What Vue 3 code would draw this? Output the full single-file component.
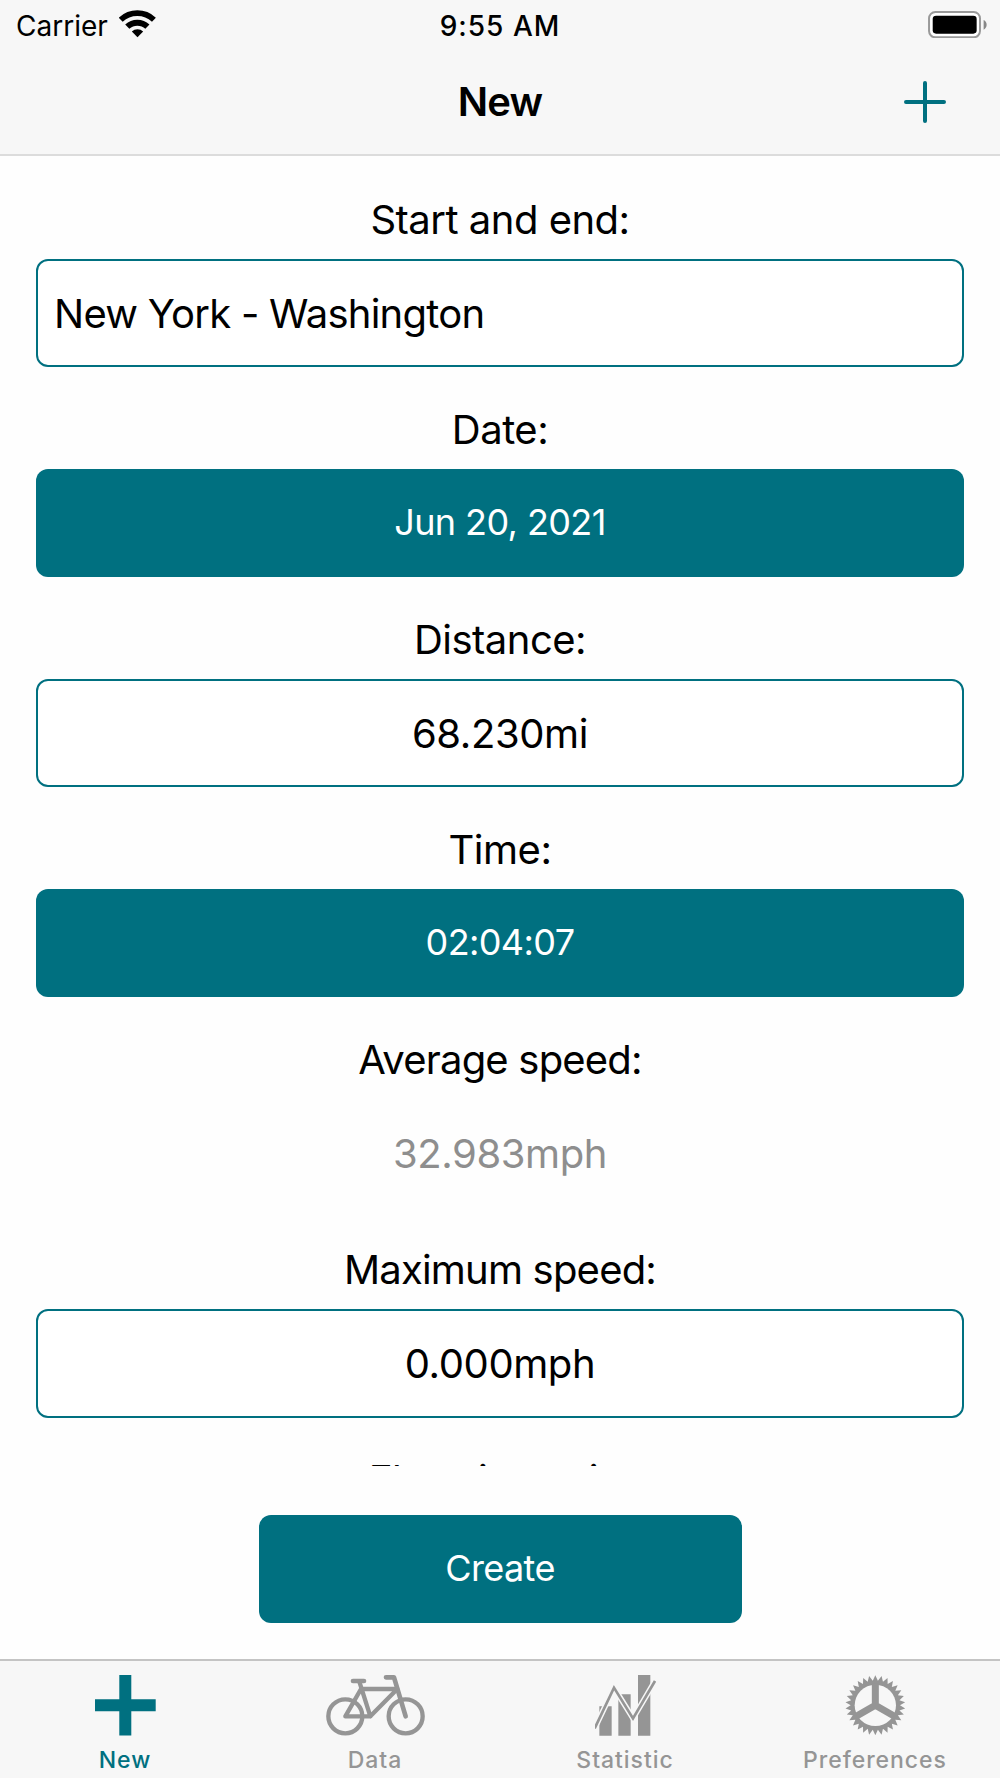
<script setup>
import { ref, computed } from 'vue'

const tour = ref('New York - Washington')
const distance = ref('68.230mi')
const maxSpeed = ref('0.000mph')
const date = ref('Jun 20, 2021')
const time = ref('02:04:07')
const avgSpeed = ref('32.983mph')

const activeTab = ref('New')

// outline of the gear, 30 small teeth around the ring
const gearPoints = computed(() => {
    const pts = []
    for (let i = 0; i < 60; i++) {
        const r = i % 2 === 0 ? 90 : 74
        const a = (i * 6 - 90) * Math.PI / 180
        pts.push((90 + r * Math.cos(a)).toFixed(1) + ',' + (90 + r * Math.sin(a)).toFixed(1))
    }
    return pts.join(' ')
})

function setTab(name) {
    activeTab.value = name
}
</script>

<template>
    <div class="screen">
        <header>
            <div class="status">
                <div class="carrier">
                    <span>Carrier</span>
                    <svg class="wifi" viewBox="360 30 111 83">
                        <path d="M365.1 59.4A72.5 72.5 0 0 1 464.9 59.4" fill="none" stroke="#000" stroke-width="17" />
                        <path d="M384.7 80.1A44 44 0 0 1 445.3 80.1" fill="none" stroke="#000" stroke-width="18" />
                        <path d="M415.5 112L398.5 94.5A25 25 0 0 1 432.5 94.5Z" />
                    </svg>
                </div>
                <div class="clock">9:55 AM</div>
                <div class="battery">
                    <svg viewBox="205 31 176 82">
                        <rect x="208" y="34" width="153" height="76" rx="19" fill="#fff" stroke="#999" stroke-width="6" />
                        <rect x="219" y="45" width="132" height="54" rx="10" />
                        <path d="M372 58C384 63 384 82 372 87Z" fill="#888" />
                    </svg>
                </div>
            </div>
            <div class="nav">
                <span></span>
                <h1>New</h1>
                <button class="add" aria-label="Add">
                    <svg viewBox="0 0 42 42">
                        <path d="M21 2V40M2 21H40" stroke="#007080" stroke-width="4" stroke-linecap="round" />
                    </svg>
                </button>
            </div>
        </header>

        <main>
            <div class="field">
                <label>Start and end:</label>
                <input v-model="tour" type="text" class="box left">
            </div>
            <div class="field">
                <label>Date:</label>
                <button class="box filled">{{ date }}</button>
            </div>
            <div class="field">
                <label>Distance:</label>
                <input v-model="distance" type="text" class="box">
            </div>
            <div class="field">
                <label>Time:</label>
                <button class="box filled">{{ time }}</button>
            </div>
            <div class="field">
                <label class="tight">Average speed:</label>
                <div class="box readonly">{{ avgSpeed }}</div>
            </div>
            <div class="field">
                <label class="tight">Maximum speed:</label>
                <input v-model="maxSpeed" type="text" class="box">
            </div>
            <div class="field">
                <label class="tight">Elevation gain:</label>
            </div>
        </main>

        <div class="actions">
            <button class="box filled create">Create</button>
        </div>

        <nav class="tabs">
            <button class="tab" :class="{ active: activeTab === 'New' }" @click="setTab('New')">
                <svg width="61" height="61" viewBox="0 0 61 61">
                    <path d="M24.3 0h12v24.2h24.4v12H36.3v24.3h-12V36.2H0v-12h24.3z" fill="currentColor" />
                </svg>
                <span>New</span>
            </button>
            <button class="tab" :class="{ active: activeTab === 'Data' }" @click="setTab('Data')">
                <svg width="99" height="61" viewBox="48 74 297 183" fill="none" stroke="currentColor" stroke-linecap="round" stroke-linejoin="round">
                    <circle cx="106" cy="198" r="51" stroke-width="13" />
                    <circle cx="287" cy="198" r="51" stroke-width="13" />
                    <path d="M129 92H162M228 81H252L287 198" stroke-width="14" />
                    <path d="M148 94L181 198H106L153 116H262L181 198" stroke-width="13" />
                </svg>
                <span>Data</span>
            </button>
            <button class="tab" :class="{ active: activeTab === 'Statistic' }" @click="setTab('Statistic')">
                <svg width="61" height="61" viewBox="104 74 183 183">
                    <path d="M117 168H154V256H117ZM174 132H211V256H174ZM233 74H270V256H233Z" fill="currentColor" />
                    <path d="M103 234L161 112L218 204L284 92" fill="none" stroke="#f7f7f7" stroke-width="17" />
                    <path d="M103 234L161 112L218 204L284 92" fill="none" stroke="currentColor" stroke-width="8" />
                </svg>
                <span>Statistic</span>
            </button>
            <button class="tab" :class="{ active: activeTab === 'Preferences' }" @click="setTab('Preferences')">
                <svg width="61" height="61" viewBox="-1 -1 183 183">
                    <polygon :points="gearPoints" fill="currentColor" />
                    <circle cx="90" cy="90" r="62" fill="#f7f7f7" />
                    <path d="M90 25V90M90 90L34 122M90 90L146 122" stroke="currentColor" stroke-width="21" />
                </svg>
                <span>Preferences</span>
            </button>
        </nav>
    </div>
</template>

<style>
body {
    margin: 0;
    background: #fff;
}
</style>

<style scoped>
.screen {
    width: 1000px;
    height: 1778px;
    display: flex;
    flex-direction: column;
    overflow: hidden;
    background: #fefefe;
    color: #000;
    font-family: Inter, "Liberation Sans", sans-serif;
}

header {
    box-sizing: border-box;
    height: 156px;
    background: #f7f7f7;
    border-bottom: 2px solid #dcdcdc;
}

.status {
    display: grid;
    grid-template-columns: 1fr auto 1fr;
    align-items: center;
    height: 51px;
    padding: 0 13px;
    font-size: 28px;
}

.carrier {
    display: flex;
    align-items: center;
    gap: 11px;
    padding-left: 3px;
}

.wifi {
    width: 37px;
    height: 27.6px;
    margin-top: -3px;
}

.clock {
    font-size: 28px;
    font-weight: 500;
    letter-spacing: 1px;
}

.battery {
    display: flex;
    justify-content: flex-end;
}

.battery svg {
    width: 58.7px;
    height: 27.3px;
    margin-top: -2px;
}

.nav {
    display: grid;
    grid-template-columns: 1fr auto 1fr;
    align-items: center;
    height: 101px;
    padding: 0 54px;
}

h1 {
    margin: 0;
    font-size: 40px;
    font-weight: 600;
    line-height: 48px;
    letter-spacing: -0.8px;
}

button {
    padding: 0;
    border: none;
    background: none;
    font-family: inherit;
}

.add {
    justify-self: end;
    width: 42px;
    height: 42px;
}

.add svg {
    display: block;
}

main {
    box-sizing: border-box;
    height: 1310px;
    padding: 39.6px 36px 0;
    overflow: hidden;
}

.field {
    height: 210.1px;
}

label {
    display: block;
    margin-bottom: 15.3px;
    font-size: 40px;
    line-height: 48px;
    letter-spacing: -0.5px;
    text-align: center;
}

.tight {
    letter-spacing: -0.8px;
}

.box {
    box-sizing: border-box;
    display: block;
    width: 100%;
    height: 108.2px;
    padding: 1px 16px 0;
    border: 2.4px solid #007080;
    border-radius: 12px;
    background: #fff;
    color: #000;
    font-family: inherit;
    font-size: 40px;
    letter-spacing: -0.4px;
    text-align: center;
    outline: none;
}

/* calt lifts the hyphen next to capitals */
.left {
    font-feature-settings: "calt" 0;
    letter-spacing: -0.75px;
    text-align: left;
}

.filled {
    border: none;
    padding: 0 0 2px;
    background: #007080;
    color: #fff;
    font-size: 36px;
    letter-spacing: -0.6px;
}

.readonly {
    border-color: transparent;
    background: none;
    color: #8e8e8e;
    line-height: 104px;
}

.actions {
    display: flex;
    justify-content: center;
    height: 144px;
    padding-top: 48.5px;
}

.create {
    width: 483px;
}

.tabs {
    box-sizing: border-box;
    display: flex;
    flex: 1;
    background: #f7f7f7;
    border-top: 2px solid #c4c4c4;
}

.tab {
    display: flex;
    flex: 1;
    flex-direction: column;
    align-items: center;
    padding-top: 14px;
    color: #959595;
    font-size: 23px;
    font-weight: 500;
}

.tab span {
    margin-top: 10px;
    line-height: 28px;
    letter-spacing: 0.95px;
}

.tab.active {
    color: #007080;
}
</style>
